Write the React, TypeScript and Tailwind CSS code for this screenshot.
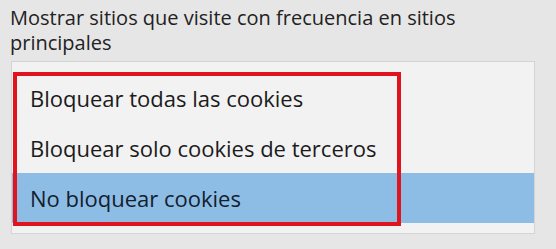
const options = [
  "Bloquear todas las cookies",
  "Bloquear solo cookies de terceros",
  "No bloquear cookies",
];

export default function App() {
  const selected = 2;
  return (
    <div
      className="w-[556px] h-[249px] bg-[#e6e6e6] text-[#1b1b1b] overflow-hidden"
      style={{ fontFamily: '"Open Sans", "Noto Sans", sans-serif' }}
    >
      <p className="pl-[10px] pt-[5px] pr-[90px] text-[20px] leading-[25px] text-[#222]">
        Mostrar sitios que visite con frecuencia en sitios principales
      </p>

      <div className="relative mt-[6px] ml-[11px] w-[524px] bg-[#f2f2f2] border border-[#d4d4d4] pt-[11px] pb-[10px]">
        {options.map((o, i) => (
          <div
            key={o}
            className={
              "h-[50px] flex items-center pl-[18px] text-[22px] " +
              (i === selected ? "bg-[#8dbde5] text-[#13202e]" : "")
            }
          >
            {o}
          </div>
        ))}
        {/* red highlight frame */}
        <div className="absolute left-[1px] top-[10px] w-[388px] h-[154px] border-4 border-[#e0141e]" />
      </div>
    </div>
  );
}
